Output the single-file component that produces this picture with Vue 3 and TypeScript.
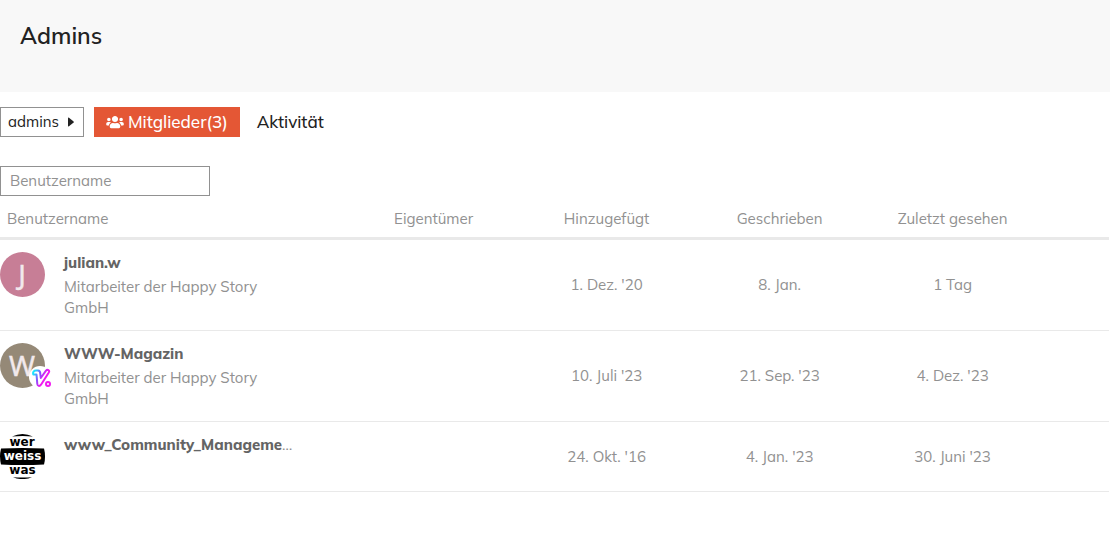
<script setup lang="ts">
import { ref } from 'vue'

type Avatar = 'letter' | 'logo'

interface Member {
  name: string
  truncated?: boolean
  title?: string
  avatar: Avatar
  letter?: string
  tone?: string
  flair?: boolean
  added: string
  posted: string
  seen: string
}

const filter = ref('')

const members: Member[] = [
  { name: 'julian.w', title: 'Mitarbeiter der Happy Story GmbH', avatar: 'letter', letter: 'J', tone: 'rose', added: "1. Dez. '20", posted: '8. Jan.', seen: '1 Tag' },
  { name: 'WWW-Magazin', title: 'Mitarbeiter der Happy Story GmbH', avatar: 'letter', letter: 'W', tone: 'taupe', flair: true, added: "10. Juli '23", posted: "21. Sep. '23", seen: "4. Dez. '23" },
  { name: 'www_Community_Manageme', truncated: true, avatar: 'logo', added: "24. Okt. '16", posted: "4. Jan. '23", seen: "30. Juni '23" },
]
</script>

<template>
  <main class="page">
    <header class="banner">
      <h1>Admins</h1>
    </header>

    <nav class="tabs">
      <button class="picker" type="button">
        <span class="label">admins</span>
        <svg class="caret" viewBox="0 0 6 10" aria-hidden="true"><path d="M0 1.2Q0 0 1 .7L5.6 4.4Q6 5 5.6 5.5L1 9.3Q0 10 0 8.8Z" /></svg>
      </button>
      <a class="tab active" href="#members">
        <svg class="users" viewBox="0 0 640 512" aria-hidden="true"><path d="M96 224c35.300 0 64-28.700 64-64s-28.700-64-64-64-64 28.700-64 64 28.700 64 64 64zm448 0c35.300 0 64-28.700 64-64s-28.700-64-64-64-64 28.700-64 64 28.700 64 64 64zm32 32h-64c-17.600 0-33.500 7.100-45.100 18.600 40.300 22.100 68.900 62 75.100 109.400h66c17.700 0 32-14.300 32-32v-32c0-35.300-28.700-64-64-64zm-256 0c61.900 0 112-50.100 112-112S381.900 32 320 32 208 82.100 208 144s50.100 112 112 112zm76.800 32h-8.300c-20.800 10-43.900 16-68.500 16s-47.600-6-68.500-16h-8.300C179.600 288 128 339.600 128 403.200V432c0 26.500 21.500 48 48 48h288c26.500 0 48-21.500 48-48v-28.800c0-63.600-51.600-115.200-115.200-115.200zm-223.700-13.400C161.500 263.100 145.600 256 128 256H64c-35.300 0-64 28.700-64 64v32c0 17.700 14.300 32 32 32h65.900c6.300-47.400 34.900-87.300 75.200-109.400z" /></svg>
        <span class="label">Mitglieder(3)</span>
      </a>
      <a class="tab" href="#activity"><span class="label">Aktivität</span></a>
    </nav>

    <input v-model="filter" class="filter" type="text" placeholder="Benutzername" aria-label="Benutzername" />

    <table class="members">
      <colgroup>
        <col class="col-name" />
        <col class="col-data" span="4" />
        <col />
      </colgroup>
      <thead>
        <tr>
          <th class="first" scope="col">Benutzername</th>
          <th scope="col">Eigentümer</th>
          <th scope="col">Hinzugefügt</th>
          <th scope="col">Geschrieben</th>
          <th scope="col">Zuletzt gesehen</th>
          <td></td>
        </tr>
      </thead>
      <tbody>
        <tr v-for="m in members" :key="m.name">
          <td class="user-cell">
            <div class="user">
              <div class="avatar">
                <svg v-if="m.avatar === 'letter'" class="face" :class="m.tone" viewBox="0 0 45 45" aria-hidden="true">
                  <circle cx="22.5" cy="22.5" r="22.5" />
                  <text class="initial" x="22" y="33" text-anchor="middle">{{ m.letter }}</text>
                </svg>
                <svg v-else class="face" viewBox="0 0 45 45" aria-hidden="true">
                  <path d="M12 2.500Q22.500-2.500 33 2.500Q22.500 1.500 12 2.500Z" />
                  <path d="M1 14.500Q22.500 13.500 44 14.500Q46 22.500 44 30.500Q22.500 31.500 1 30.500Q-1 22.500 1 14.500Z" />
                  <path d="M13 43.200Q22.500 47 32 43.200Q22.500 43.800 13 43.200Z" />
                  <text class="word" x="22" y="12" text-anchor="middle">wer</text>
                  <text class="word light" x="22.500" y="26" text-anchor="middle">weiss</text>
                  <text class="word" x="22.500" y="40" text-anchor="middle">was</text>
                </svg>
                <svg v-if="m.flair" class="flair" viewBox="0 0 22 22" aria-hidden="true">
                  <defs>
                    <linearGradient id="flair-ink" x1="0" y1="0" x2="1" y2="0.500">
                      <stop offset="0.100" stop-color="#19e6ff" />
                      <stop offset="0.450" stop-color="#8b4dff" />
                      <stop offset="0.750" stop-color="#f019f0" />
                    </linearGradient>
                  </defs>
                  <circle class="disc" cx="11" cy="11" r="11" />
                  <path class="ink" d="M4.300 8.500C3.500 6 5 4.500 7 4.500H9C11 4.500 11.300 6 11.300 8L11.800 12L17 4.700C18.500 3 21 4.500 19.800 6.500L12 18.700C10.500 20.800 8.500 20 8.300 18L7.500 8.500H4.500" />
                  <circle class="dot" cx="19" cy="18" r="2" />
                </svg>
              </div>
              <div class="details">
                <a class="name" href="#user">{{ m.name }}</a><span v-if="m.truncated" class="more">…</span>
                <div v-if="m.title" class="title">{{ m.title }}</div>
              </div>
            </div>
          </td>
          <td></td>
          <td>{{ m.added }}</td>
          <td>{{ m.posted }}</td>
          <td>{{ m.seen }}</td>
          <td></td>
        </tr>
      </tbody>
    </table>
  </main>
</template>

<style>
body {
  margin: 0;
  background: #fff;
}
</style>

<style scoped>
.page {
  font-family: Muli, Mulish, "Open Sans", sans-serif;
  font-size: 15px;
  line-height: 21px;
  color: #919191;
}
.banner {
  box-sizing: border-box;
  min-height: 92px;
  padding: 20px;
  background: #f8f8f8;
}
h1 {
  margin: 0;
  font-size: 23px;
  line-height: 32px;
  font-weight: 600;
  color: #222;
}
.tabs {
  display: flex;
  align-items: center;
  gap: 10px;
  margin-top: 15px;
}
.picker {
  box-sizing: border-box;
  display: flex;
  align-items: center;
  gap: 9px;
  height: 30px;
  padding: 0 9px 0 7px;
  border: 1px solid #919191;
  background: #fff;
  color: #222;
  font: inherit;
}
.label {
  padding-bottom: 2px;
}
.caret {
  width: 6px;
  height: 10px;
  fill: #222;
}
.tab {
  box-sizing: border-box;
  display: flex;
  align-items: center;
  gap: 4px;
  height: 30px;
  padding: 0 7px;
  color: #222;
  font-size: 17px;
  font-weight: 500;
  text-decoration: none;
}
.tab.active {
  padding: 0 12px;
  background: #e45735;
  color: #fff;
}
.users {
  width: 18px;
  height: 14px;
  fill: currentColor;
}
.filter {
  box-sizing: border-box;
  display: block;
  width: 210px;
  height: 30px;
  margin-top: 29px;
  padding: 0 9px 2px;
  border: 1px solid #919191;
  border-radius: 0;
  background: #fff;
  color: #222;
  font: inherit;
}
.filter::placeholder {
  color: #919191;
  opacity: 1;
}
.members {
  width: calc(100% - 1px);
  table-layout: fixed;
  border-collapse: separate;
  border-spacing: 0;
}
.col-name {
  width: 31.3%;
}
.col-data {
  width: 15.6%;
}
th,
td {
  padding: 0 0 1px;
  border-bottom: 1px solid #e9e9e9;
  font-weight: 400;
  text-align: center;
  vertical-align: middle;
}
thead th,
thead td {
  padding: 12px 0 8px;
  border-bottom-width: 3px;
}
th.first {
  padding-left: 7px;
  text-align: left;
}
.user-cell {
  padding: 12px 0;
  text-align: left;
}
.user {
  display: flex;
  align-items: flex-start;
  gap: 19px;
}
.avatar {
  position: relative;
  flex: none;
  width: 45px;
  height: 45px;
}
.face {
  display: block;
  width: 45px;
  height: 45px;
}
.rose {
  fill: #c77e96;
}
.taupe {
  fill: #958977;
}
.initial {
  fill: #f2e9ec;
  stroke: #f2e9ec;
  stroke-width: 0.4px;
  font-family: "Noto Sans", sans-serif;
  font-size: 28px;
}
.word {
  fill: #000;
  font-family: "DejaVu Sans", sans-serif;
  font-size: 12px;
  font-weight: 700;
}
.word.light {
  fill: #fff;
}
.flair {
  position: absolute;
  right: -6px;
  bottom: 0;
  width: 22px;
  height: 22px;
}
.disc {
  fill: #fff;
}
.ink {
  fill: none;
  stroke: url(#flair-ink);
  stroke-width: 2;
  stroke-linecap: round;
  stroke-linejoin: round;
}
.dot {
  fill: none;
  stroke: #f019f0;
  stroke-width: 2;
}
.details {
  max-width: 240px;
}
.name {
  color: #646464;
  font-weight: 800;
  text-decoration: none;
}
.title {
  max-width: 220px;
  margin-top: 3px;
}
</style>
